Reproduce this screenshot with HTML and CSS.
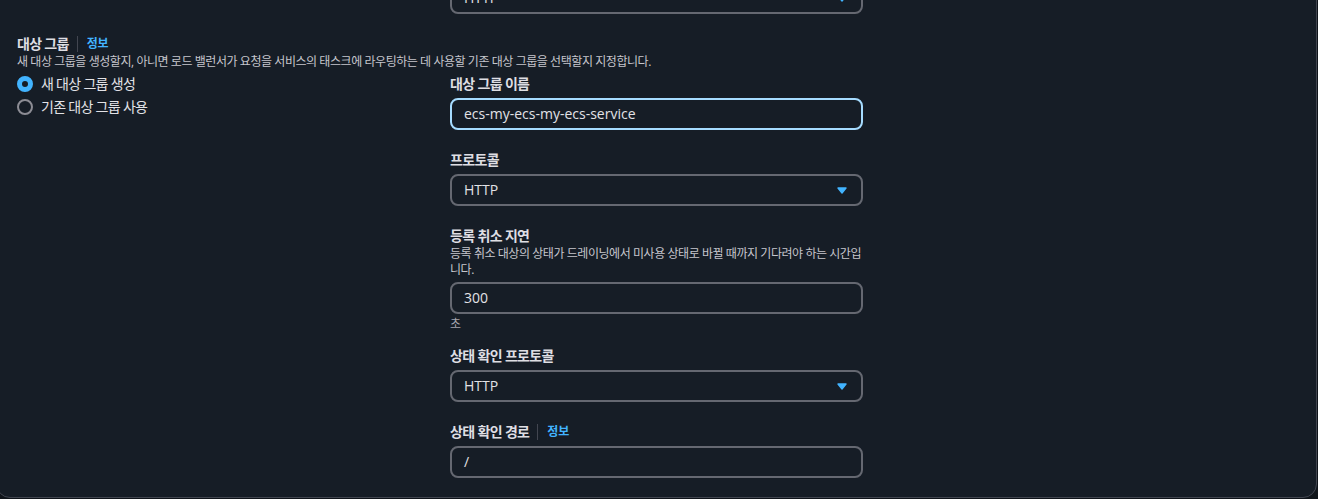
FILE: index.html
```html
<!DOCTYPE html>
<html lang="ko">
<head>
<meta charset="utf-8">
<title>대상 그룹</title>
<link rel="stylesheet" href="styles.css">
</head>
<body>
<div class="card">
  <div class="cols">
    <div></div>
    <div class="select"><span class="value">HTTP</span><svg class="caret" width="10" height="7" viewBox="0 0 10 7"><path d="M1 1 L9 1 L5 6 Z"/></svg></div>
  </div>

  <section class="group">
    <div class="head"><span class="label">대상 그룹</span><a class="info">정보</a></div>
    <p class="desc">새 대상 그룹을 생성할지, 아니면 로드 밸런서가 요청을 서비스의 태스크에 라우팅하는 데 사용할 기존 대상 그룹을 선택할지 지정합니다.</p>

    <div class="cols body">
      <div class="radios">
        <label class="radio"><span class="dot on"></span><span class="rtext">새 대상 그룹 생성</span></label>
        <label class="radio"><span class="dot"></span><span class="rtext">기존 대상 그룹 사용</span></label>
      </div>

      <div class="fields">
        <div class="field">
          <div class="flabel">대상 그룹 이름</div>
          <div class="input focused"><span class="value">ecs-my-ecs-my-ecs-service</span></div>
        </div>
        <div class="field">
          <div class="flabel">프로토콜</div>
          <div class="select"><span class="value">HTTP</span><svg class="caret" width="10" height="7" viewBox="0 0 10 7"><path d="M1 1 L9 1 L5 6 Z"/></svg></div>
        </div>
        <div class="field with-constraint">
          <div class="flabel tight">등록 취소 지연</div>
          <p class="fdesc">등록 취소 대상의 상태가 드레이닝에서 미사용 상태로 바뀔 때까지 기다려야 하는 시간입니다.</p>
          <div class="input"><span class="value">300</span></div>
          <div class="constraint">초</div>
        </div>
        <div class="field">
          <div class="flabel">상태 확인 프로토콜</div>
          <div class="select"><span class="value">HTTP</span><svg class="caret" width="10" height="7" viewBox="0 0 10 7"><path d="M1 1 L9 1 L5 6 Z"/></svg></div>
        </div>
        <div class="field">
          <div class="flabel"><span>상태 확인 경로</span><a class="info">정보</a></div>
          <div class="input"><span class="value">/</span></div>
        </div>
      </div>
    </div>
  </section>
</div>
</body>
</html>
```

FILE: styles.css
```css
* { box-sizing: border-box; }

html, body {
  margin: 0;
  padding: 0;
  height: 499px;
  overflow: hidden;
  background: #0f141a;
}

body {
  font-family: "Open Sans", "Noto Sans CJK KR", sans-serif;
  color: #dedee3;
  font-size: 14px;
}

.card {
  margin: -20px 1px 0 -4px;
  height: 518px;
  background: #161d26;
  border: 1px solid #424650;
  border-radius: 0 0 14px 14px;
  padding: 1px 20px 19px 20px;
}

.cols {
  display: grid;
  grid-template-columns: 413px 413px;
  column-gap: 20px;
}

.group {
  margin-top: 20px;
}

.head {
  display: flex;
  align-items: center;
  height: 20px;
}

.label {
  font-weight: 700;
  font-size: 14px;
  letter-spacing: -0.7px;
  line-height: 20px;
  margin-right: 8px;
}

.info {
  display: inline-flex;
  align-items: center;
  height: 16px;
  border-left: 1px solid #424650;
  padding-left: 9px;
  font-size: 12px;
  font-weight: 700;
  letter-spacing: -0.2px;
  color: #42b4ff;
  line-height: 16px;
}

.desc {
  margin: 0;
  font-size: 12px;
  line-height: 16px;
  letter-spacing: -0.44px;
  color: #c6c6cd;
  white-space: nowrap;
}

.body {
  margin-top: 4px;
}

.radios {
  display: flex;
  flex-direction: column;
  gap: 3px;
}

.radio {
  display: flex;
  align-items: center;
  height: 20px;
  gap: 8px;
}

.dot {
  width: 16px;
  height: 16px;
  border-radius: 50%;
  border: 2px solid #8c8c94;
  flex: none;
}

.dot.on {
  border: 5px solid #42b4ff;
  background: #161d26;
}

.rtext {
  font-size: 14px;
  letter-spacing: -0.7px;
  line-height: 20px;
  color: #e2e2e6;
}

.fields {
  display: flex;
  flex-direction: column;
  gap: 20px;
}

.field {
  display: flex;
  flex-direction: column;
}

.field.with-constraint {
  margin-bottom: -6px;
}

.flabel {
  display: flex;
  align-items: center;
  font-weight: 700;
  font-size: 14px;
  letter-spacing: -0.65px;
  line-height: 20px;
  margin-bottom: 4px;
}

.flabel span {
  margin-right: 8px;
}

.flabel.tight {
  margin-bottom: 0;
}

.fdesc {
  margin: 0 0 4px 0;
  font-size: 12px;
  line-height: 16px;
  letter-spacing: -0.44px;
  color: #c6c6cd;
}

.input, .select {
  height: 32px;
  border: 2px solid #656871;
  border-radius: 8px;
  background: #161d26;
  display: flex;
  align-items: center;
  padding: 0 14px 0 12px;
  letter-spacing: 0;
}

.select {
  justify-content: space-between;
}

.input.focused {
  border-color: #a6dcff;
}

.value {
  font-family: "Open Sans", sans-serif;
  font-size: 14px;
  color: #e2e2e6;
  line-height: 20px;
}

.caret path {
  fill: #42b4ff;
  stroke: #42b4ff;
  stroke-width: 1.4;
  stroke-linejoin: round;
}

.constraint {
  margin-top: 2px;
  font-size: 12px;
  line-height: 16px;
  color: #a4a4ad;
}
```
